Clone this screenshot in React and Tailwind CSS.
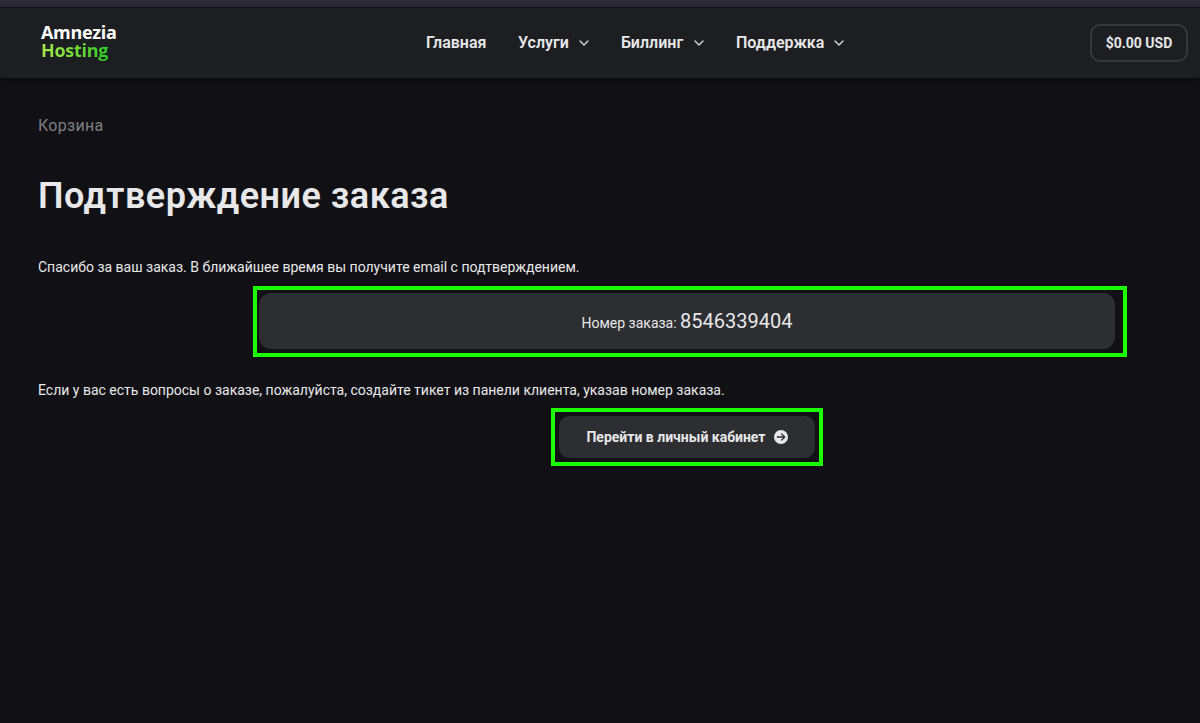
import React from "react";
import { ChevronDown } from "lucide-react";
import { FaCircleArrowRight } from "react-icons/fa6";

function NavItem({ label, width, menu, gap }) {
  return (
    <a className={`flex items-center whitespace-nowrap ${gap}`}>
      <span className={width}>{label}</span>
      {menu && <ChevronDown className="ml-[7px] h-4 w-4 text-[#d0d0d2]" strokeWidth={2.2} />}
    </a>
  );
}

export default function App() {
  return (
    <div className="flex h-[723px] w-[1200px] flex-col overflow-hidden bg-[#111115] font-['Roboto',sans-serif] text-[#e8e8ea]">
      <div className="h-[7px] shrink-0 bg-[#2e2b38]" />
      <header className="flex h-[71px] shrink-0 border-t border-[#121214] bg-[#1d1e21] shadow-[0_2px_8px_rgba(0,0,0,0.45)]">
        <a className="ml-[41px] mt-[15px] flex w-[385px] flex-col items-start font-['Open_Sans',sans-serif] text-[18px] font-bold leading-[18px]">
          <span className="h-[18px] tracking-[-0.3px] text-white">Amnezia</span>
          <span className="bg-gradient-to-r from-[#a4e84a] to-[#22cf22] bg-clip-text pb-1 tracking-[-0.3px] text-transparent">Hosting</span>
        </a>
        <nav className="flex h-[69px] flex-1 items-center text-[16px] font-semibold">
          <NavItem label="Главная" width="w-[60px]" gap="mr-8" />
          <NavItem label="Услуги" width="w-[51px]" menu gap="mr-[29px]" />
          <NavItem label="Биллинг" width="w-[63px]" menu gap="mr-[29px]" />
          <NavItem label="Поддержка" width="w-[88px]" menu gap="" />
        </nav>
        <button className="mr-3 mt-4 flex h-[38px] w-[98px] items-center justify-center rounded-[10px] border-2 border-[#36373b] text-[14px] font-bold">
          $0.00 USD
        </button>
      </header>

      <main className="flex flex-col px-[38px]">
        <div className="mt-9 h-6 text-[16px] leading-6 tracking-[0.3px] text-[#7e7f83]">Корзина</div>
        <h1 className="mt-[33px] h-[50px] whitespace-nowrap text-[36px] font-semibold leading-[50px] tracking-[0.5px]">Подтверждение заказа</h1>
        <p className="mt-9 h-5 whitespace-nowrap text-[14px] leading-5">Спасибо за ваш заказ. В ближайшее время вы получите email с подтверждением.</p>
        <div className="ml-[215px] mt-[9px] h-[71px] w-[874px] border-4 border-[#1cff00] pl-[2px] pr-2 pt-[3px]">
          <div className="flex h-14 items-baseline justify-center rounded-xl bg-[#2d2e31] text-[14px] leading-[57px]">
            <span>Номер заказа:&nbsp;</span>
            <span className="text-[20px]">8546339404</span>
          </div>
        </div>
        <p className="mt-[23px] h-5 whitespace-nowrap text-[14px] leading-5">Если у вас есть вопросы о заказе, пожалуйста, создайте тикет из панели клиента, указав номер заказа.</p>
        <div className="ml-[513px] mt-2 h-[58px] w-[272px] border-4 border-[#1cff00] p-1">
          <button className="flex h-[42px] w-full items-center justify-center whitespace-nowrap rounded-[10px] bg-[#2d2e31] text-[14px] font-bold">
            <span>Перейти в личный кабинет</span>
            <FaCircleArrowRight className="ml-2 h-[14px] w-[14px]" />
          </button>
        </div>
      </main>
    </div>
  );
}
